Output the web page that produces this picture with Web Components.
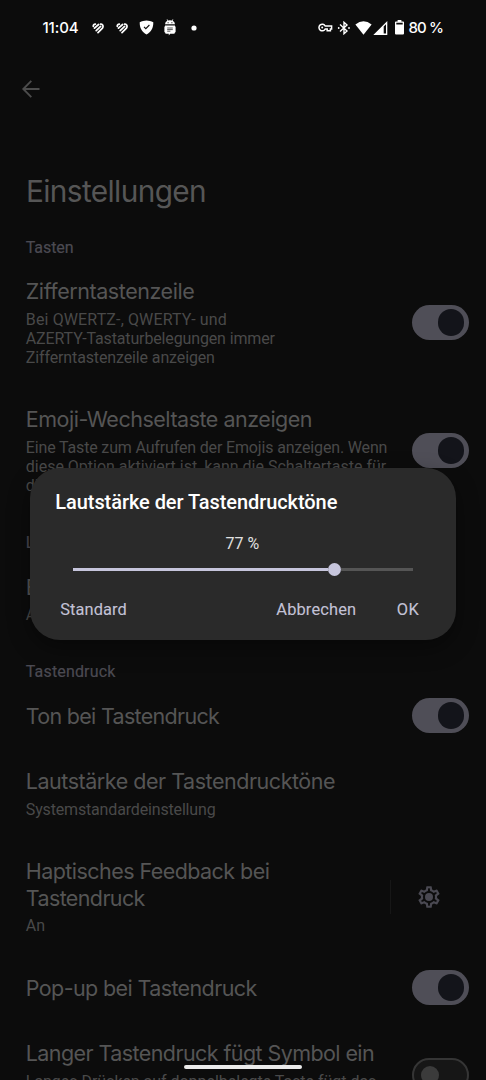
<!DOCTYPE html>
<html lang="de">
<head>
<meta charset="utf-8">
<title>Einstellungen</title>
<style>
html,body{margin:0;height:1080px;overflow:hidden;background:#0c0c0c}
body{font-family:Roboto,"Liberation Sans",sans-serif}
</style>
</head>
<body>
<settings-screen></settings-screen>
<script>
const define = (name, html, setup) => customElements.define(name, class extends HTMLElement {
  connectedCallback() {
    if (this.shadowRoot) return;
    const t = document.createElement('template');
    t.innerHTML = html;
    this.attachShadow({mode: 'open'}).append(t.content.cloneNode(true));
    if (setup) setup(this, this.shadowRoot);
  }
});

// One line of text, tracked so that its advance equals the "w" attribute.
define('text-line', `<style>:host{display:block;white-space:pre}span{display:inline-block}</style><span><slot></slot></span>`, (el, root) => {
  const w = parseFloat(el.getAttribute('w'));
  const s = root.querySelector('span');
  if (w) s.style.letterSpacing = ((w - s.getBoundingClientRect().width) / el.textContent.length).toFixed(3) + 'px';
});

define('ui-switch', `<style>
:host{display:block;box-sizing:border-box;width:56.7px;height:34.7px;border-radius:18px;background:#4f4e57;padding:4px}
i{display:block;width:26.6px;height:26.6px;border-radius:50%;background:#13141a;margin-left:21.8px}
:host([off]){background:#161616;border:2px solid #353535;padding:6.3px}
:host([off]) i{width:18px;height:18px;background:#3b3b3b;margin-left:.4px}
</style><i></i>`);

define('status-bar', `<style>
:host{display:flex;align-items:center;height:55px;box-sizing:border-box;padding:0 43px 0 42.5px;color:#fff;font:500 15px/20px Inter,sans-serif}
svg{display:block;flex:none}
.sp{flex:1}
</style>
<text-line w="36">11:04</text-line>
<svg style="margin-left:13px" width="12" height="12" viewBox="0 0 12 12" fill="none" stroke="#fff" stroke-width="1.7" stroke-linecap="round"><path d="M1.3 4.4Q1 2.3 3.4 2.2M2.5 6.2 6.6 2.5M4.2 8.6 8.6 4.4M6 10.6 10.4 6.2Q11.7 4 10.3 2.7 9.6 2 8.6 2.2"/></svg>
<svg style="margin-left:12px" width="12" height="12" viewBox="0 0 12 12" fill="none" stroke="#fff" stroke-width="1.7" stroke-linecap="round"><path d="M1.3 4.4Q1 2.3 3.4 2.2M2.5 6.2 6.6 2.5M4.2 8.6 8.6 4.4M6 10.6 10.4 6.2Q11.7 4 10.3 2.7 9.6 2 8.6 2.2"/></svg>
<svg style="margin-left:11px" width="15" height="15" viewBox="0 0 15 15"><path fill="#fff" d="M7.5.6C9.7.7 12.2 1.2 14.3 2.2 14.4 7.8 12.2 12 7.5 14.4 2.8 12 .6 7.8.7 2.2 2.8 1.2 5.3.7 7.5.6Z"/><path d="m5 6.8 1.8 1.8 3.6-3.6" fill="none" stroke="#0c0c0c" stroke-width="1.1"/></svg>
<svg style="margin-left:10px" width="12" height="17" viewBox="0 0 12 17"><path fill="#fff" d="M1 5.3Q1.2 2.7 3.4 1.8L2.6.6 3.2.2 4.2 1.5Q6 1 7.8 1.5L8.8.2 9.4.6 8.6 1.8Q10.8 2.7 11 5.3ZM1 6.4H11V7.4H11.6V13.2H11Q11 14.8 9.6 14.8H6.2L4.8 16.6V14.8H2.4Q1 14.8 1 13.2H.4V7.4H1Z"/><path stroke="#444" stroke-width=".9" d="M3.2 9H8.8M3.2 10.6H8.8M3.2 12.2H6.4"/><path fill="#0c0c0c" d="M3.6 3.2h1v1h-1zM7.4 3.2h1v1h-1z"/></svg>
<svg style="margin-left:15px" width="6" height="6"><circle cx="3" cy="3" r="2.6" fill="#fff"/></svg>
<div class="sp"></div>
<svg width="15" height="9" viewBox="0 0 15 9" fill="none" stroke="#fff" stroke-width="1.5"><path d="M7.2 3A3.3 3.3 0 1 0 7.2 6H9.2V7.7H12.4V6H13.6V3Z"/><circle cx="4.2" cy="4.5" r="1" fill="#fff" stroke="none"/></svg>
<svg style="margin-left:4px" width="14" height="14" viewBox="0 0 14 14" fill="none" stroke="#fff" stroke-width="1.4"><path d="m3 3.5 7 6.5L7 12.7V1.3l3 2.7-7 6.5"/><circle cx="1.7" cy="7" r=".9" fill="#fff" stroke="none"/><circle cx="12" cy="7" r=".9" fill="#fff" stroke="none"/></svg>
<svg style="margin-left:4.5px" width="17" height="14" viewBox="0 0 17 14"><path fill="#fff" d="M.4 3.6Q8.5-3 16.6 3.6L8.5 13.8Z"/></svg>
<svg style="margin-left:1px" width="15" height="14" viewBox="0 0 15 14"><path fill="#fff" fill-rule="evenodd" d="M14.3 0V14H.3ZM13 3.3 10.7 5.6V12.6H13Z"/></svg>
<svg style="margin-left:7px" width="9" height="15" viewBox="0 0 9 15"><path fill="#fff" fill-rule="evenodd" d="M2.6 0H6.4V1.4H8.1Q9 1.4 9 2.3V13.6Q9 14.6 8 14.6H1Q0 14.6 0 13.6V2.3Q0 1.4.9 1.4H2.6ZM1.3 2.7V4.5H7.7V2.7Z"/></svg>
<text-line style="margin-left:4.5px" w="34.5">80 %</text-line>`);

define('section-head', `<style>
:host{display:flex;align-items:flex-end;box-sizing:border-box;height:39.4px;padding:0 0 1.7px 25.8px;color:#4b4a52;font:400 16px/19.2px Roboto,sans-serif;-webkit-text-stroke:.2px #4b4a52}
</style><slot></slot>`);

define('pref-row', `<style>
:host{display:flex;align-items:center;box-sizing:border-box;padding:19.4px 17.3px 19.4px 25.8px;color:#555}
.txt{flex:1;min-width:0}
.title{font:400 21.5px/27px Inter,sans-serif;position:relative;top:.3px}
.sum{font:400 16px/19.2px Roboto,sans-serif;color:#494949}
.sum.has{margin-top:4.6px}
.end{flex:none;margin:-10px 0}
</style><div class="txt"><div class="title"><slot></slot></div><div class="sum"><slot name="sum"></slot></div></div><div class="end"><slot name="end"></slot></div>`, (el, root) => {
  if (el.querySelector('[slot=sum]')) root.querySelector('.sum').classList.add('has');
});

define('gear-action', `<style>
:host{display:flex;align-items:center;width:78px;height:34px;border-left:1px solid #171717}
svg{display:block;margin-left:25.5px}
</style><svg width="26" height="26" viewBox="0 0 24 24" fill="#4a4952"><path d="M19.43 12.98c.04-.32.07-.64.07-.98s-.03-.66-.07-.98l2.11-1.65c.19-.15.24-.42.12-.64l-2-3.46a.5.5 0 0 0-.61-.22l-2.49 1c-.52-.4-1.08-.73-1.69-.98l-.38-2.65A.488.488 0 0 0 14 2h-4c-.25 0-.46.18-.49.42l-.38 2.65c-.61.25-1.17.59-1.69.98l-2.49-1a.5.5 0 0 0-.61.22l-2 3.46c-.13.22-.07.49.12.64l2.11 1.65c-.04.32-.07.65-.07.98s.03.66.07.98l-2.11 1.65c-.19.15-.24.42-.12.64l2 3.46c.12.22.39.3.61.22l2.49-1c.52.4 1.08.73 1.69.98l.38 2.65c.03.24.24.42.49.42h4c.25 0 .46-.18.49-.42l.38-2.65c.61-.25 1.17-.59 1.69-.98l2.49 1c.23.09.49 0 .61-.22l2-3.46c.12-.22.07-.49-.12-.64zm-1.98-1.71c.04.31.05.52.05.73s-.02.43-.05.73l-.14 1.13.89.7 1.08.84-.7 1.21-1.27-.51-1.04-.42-.9.68c-.43.32-.84.56-1.25.73l-1.06.43-.16 1.13-.2 1.35h-1.4l-.19-1.35-.16-1.13-1.06-.43c-.43-.18-.83-.41-1.23-.71l-.91-.7-1.06.43-1.27.51-.7-1.21 1.08-.84.89-.7-.14-1.13c-.03-.31-.05-.54-.05-.74s.02-.43.05-.73l.14-1.13-.89-.7-1.08-.84.7-1.21 1.27.51 1.04.42.9-.68c.43-.32.84-.56 1.25-.73l1.06-.43.16-1.13.2-1.35h1.39l.19 1.35.16 1.13 1.06.43c.43.18.83.41 1.23.71l.91.7 1.06-.43 1.27-.51.7 1.21-1.07.85-.89.7z"/><circle cx="12" cy="12" r="3.7"/></svg>`);

define('volume-slider', `<style>
:host{display:flex;align-items:center;height:14px}
.on{width:255px;height:2.2px;background:#c6c5dc}
.knob{width:13.2px;height:13.2px;border-radius:50%;background:#c6c5dc}
.rest{flex:1;height:2.2px;background:#555}
</style><div class="on"></div><div class="knob"></div><div class="rest"></div>`);

define('volume-dialog', `<style>
:host{display:block;box-sizing:border-box;width:426.3px;height:172px;border-radius:30px;background:#2a2a2a;box-shadow:0 8px 22px rgba(0,0,0,.4);padding:22px 43px 0}
.t{font:500 20px/24px Roboto,sans-serif;color:#fff;margin-left:-17.4px}
.v{display:flex;justify-content:center;font:400 16px/20px Roboto,sans-serif;color:#e0e0e0;margin:19.6px 0 8.9px -1px}
.b{display:flex;font:400 16.4px/20px Roboto,sans-serif;color:#c3c2d6;margin:24px -6.3px 0 -12.5px;-webkit-text-stroke:.1px #c3c2d6}
.b :nth-child(2){margin-left:auto;margin-right:40.5px}
</style>
<div class="t"><text-line w="282">Lautstärke der Tastendrucktöne</text-line></div>
<div class="v"><text-line w="33.5">77 %</text-line></div>
<volume-slider></volume-slider>
<div class="b"><text-line w="66.8">Standard</text-line><text-line w="80">Abbrechen</text-line><text-line w="22.5">OK</text-line></div>`);

define('settings-screen', `<style>
:host{display:block;position:relative;width:486px;height:1080px;overflow:hidden;background:#0c0c0c}
.back{display:block;margin:24px 0 0 20.5px}
h1{margin:73px 0 0 26px;height:47.2px;font:400 29.8px/38px Inter,sans-serif;color:#565656}
volume-dialog{position:absolute;left:29.7px;top:468px}
.home{position:absolute;left:184px;top:1064.5px;width:117.5px;height:4.6px;border-radius:3px;background:#ebebeb}
</style>
<status-bar></status-bar>
<svg class="back" width="20" height="20" viewBox="0 0 20 20" fill="none" stroke="#4c4c4c" stroke-width="1.9"><path d="M18.5 10H2.5M10.3 1.8 2.3 10l8 8.2"/></svg>
<h1><text-line w="180">Einstellungen</text-line></h1>
<section-head><text-line w="47.6">Tasten</text-line></section-head>
<pref-row><text-line w="168.5">Zifferntastenzeile</text-line>
<text-line slot="sum" w="201.2">Bei QWERTZ-, QWERTY- und</text-line><text-line slot="sum" w="249">AZERTY-Tastaturbelegungen immer</text-line><text-line slot="sum" w="189">Zifferntastenzeile anzeigen</text-line><ui-switch slot="end"></ui-switch></pref-row>
<pref-row><text-line w="286.3">Emoji-Wechseltaste anzeigen</text-line>
<text-line slot="sum" w="361.5">Eine Taste zum Aufrufen der Emojis anzeigen. Wenn</text-line><text-line slot="sum" w="360.4">diese Option aktiviert ist, kann die Schaltertaste für</text-line><text-line slot="sum">die Sprache deaktiviert sein</text-line><ui-switch slot="end"></ui-switch></pref-row>
<section-head><text-line>Layout</text-line></section-head>
<pref-row><text-line>Einhandmodus</text-line><text-line slot="sum">Aus</text-line></pref-row>
<section-head><text-line w="89.7">Tastendruck</text-line></section-head>
<pref-row><text-line w="193.3">Ton bei Tastendruck</text-line><ui-switch slot="end"></ui-switch></pref-row>
<pref-row><text-line w="309.3">Lautstärke der Tastendrucktöne</text-line><text-line slot="sum" w="189.7">Systemstandardeinstellung</text-line></pref-row>
<pref-row><text-line w="243.5">Haptisches Feedback bei</text-line><text-line w="119">Tastendruck</text-line><text-line slot="sum" w="19.5">An</text-line><gear-action slot="end"></gear-action></pref-row>
<pref-row><text-line w="230.8">Pop-up bei Tastendruck</text-line><ui-switch slot="end"></ui-switch></pref-row>
<pref-row><text-line w="348.3">Langer Tastendruck fügt Symbol ein</text-line><text-line slot="sum" w="350.5">Langes Drücken auf doppelbelegte Taste fügt das</text-line><text-line slot="sum">Symbol ein</text-line><ui-switch off slot="end"></ui-switch></pref-row>
<volume-dialog></volume-dialog>
<div class="home"></div>`);
</script>
</body>
</html>
